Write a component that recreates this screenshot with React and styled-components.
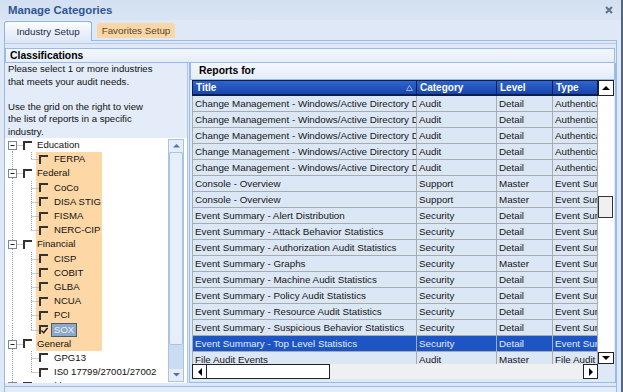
import styled, { createGlobalStyle } from "styled-components";

const GlobalStyle = createGlobalStyle`
  * { box-sizing: border-box; }
  html, body { margin: 0; padding: 0; background: #dfe8f6; }
  body { font-family: "Liberation Sans", Arial, sans-serif; font-size: 9.6px; color: #111; }
`;

const Window = styled.div`
  width: 623px;
  height: 392px;
  display: flex;
  flex-direction: column;
  background: #dfe8f6;
  border-right: 2px solid #55657c;
  overflow: hidden;
`;

const TitleBar = styled.div`
  height: 20px;
  display: flex;
  align-items: center;
  justify-content: space-between;
  padding: 0 8px 0 8px;
  background: linear-gradient(#d2e0f1, #dae5f4);
`;

const Title = styled.div`
  font-size: 11.4px;
  font-weight: bold;
  color: #2f5597;
`;

const TabStrip = styled.div`
  height: 20px;
  display: flex;
  align-items: flex-end;
  gap: 5px;
  padding-left: 4px;
`;

const Tab = styled.div`
  height: ${(p) => (p.$active ? "20px" : "15px")};
  width: ${(p) => p.$w}px;
  margin-bottom: ${(p) => (p.$active ? "-1px" : "2px")};
  display: flex;
  align-items: center;
  justify-content: center;
  font-size: 9.8px;
  position: relative;
  z-index: 1;
  color: ${(p) => (p.$active ? "#15284b" : "#5b4630")};
  background: ${(p) => (p.$active ? "linear-gradient(#fbfdff, #dfe8f6)" : "#f9d6a5")};
  border: ${(p) => (p.$active ? "1px solid #8db2e3" : "none")};
  border-bottom: none;
  border-radius: 3px 3px 0 0;
`;

const TabBody = styled.div`
  flex: 1;
  margin: 0 4px 0 4px;
  border: 1px solid #99bbe8;
  border-bottom: none;
  padding-top: 2px;
  display: flex;
  flex-direction: column;
`;

const Frame = styled.div`
  flex: 1;
  border-top: 1px solid #b5cce8;
  padding-top: 4px;
  display: flex;
  flex-direction: column;
`;

const SectionHeader = styled.div`
  height: 15px;
  margin: 0 1px 0 0;
  padding-left: 4px;
  border: 1px solid #99bbe8;
  background: linear-gradient(#f4f8fd, #e5edf8);
  font-size: 10.4px;
  font-weight: bold;
  line-height: 13px;
  color: #000;
`;

const Split = styled.div`
  height: 320px;
  display: flex;
`;

const Footer = styled.div`
  flex: 1;
  margin-top: 3px;
  border-top: 1px solid #99bbe8;
  background: #e4ecf8;
`;

const LeftPane = styled.div`
  width: 185px;
  display: flex;
  flex-direction: column;
  background: #e3ecf8;
  border-right: 1px solid #aac4e6;
`;

const Intro = styled.div`
  height: 75px;
  padding: 0 3px;
  line-height: 12.5px;
`;

const Tree = styled.div`
  flex: 1;
  display: flex;
  background: #fff;
  overflow: hidden;
`;

const TreeList = styled.div`
  flex: 1;
  overflow: hidden;
`;

const Highlight = styled.div`
  background: linear-gradient(#fdd8a6, #fdd8a6) no-repeat 31px 0 / 66px 100%;
`;

const TreeRow = styled.div`
  height: 14.2px;
  display: flex;
  align-items: center;
  white-space: nowrap;
`;

const Check = styled.span`
  width: 9px;
  height: 9px;
  flex: none;
  margin-right: ${(p) => p.$gap}px;
  border-top: 2px solid #333;
  border-left: 2px solid #333;
  display: flex;
  align-items: center;
  justify-content: center;
`;

const NodeLabel = styled.span`
  color: ${(p) => (p.$selected ? "#e9eff7" : "#111")};
  background: ${(p) => (p.$selected ? "#8ea8c9" : "transparent")};
  border: 1px solid ${(p) => (p.$selected ? "#4c5b6c" : "transparent")};
  padding: 0 2px;
  margin-left: -3px;
  line-height: 12px;
`;

const TreeScroll = styled.div`
  width: 16px;
  margin: 1px 3px 1px 0;
  display: flex;
  flex-direction: column;
  background: #c9dcf2;
  border: 1px solid #a9c3e5;
`;

const TreeArrow = styled.div`
  height: 12px;
  display: flex;
  align-items: center;
  justify-content: center;
  background: #e4edf9;
`;

const TreeThumb = styled.div`
  height: 193px;
  background: #e6eefa;
  border: 1px solid #a9c3e5;
  border-radius: 2px;
`;

const TreeTrack = styled.div`
  flex: 1;
`;

const RightPane = styled.div`
  flex: 1;
  margin-left: 1px;
  border: 1px solid #99bbe8;
  border-top: none;
  padding: 0 1px 3px 2px;
  display: flex;
  flex-direction: column;
`;

const PaneHeader = styled.div`
  height: 18px;
  margin: 0 -1px 0 -2px;
  padding-left: 8px;
  border: 1px solid #99bbe8;
  border-top: none;
  background: linear-gradient(#f4f8fd, #e5edf8);
  font-size: 10.4px;
  font-weight: bold;
  line-height: 16px;
  color: #000;
`;

const Grid = styled.div`
  flex: 1;
  display: flex;
  flex-direction: column;
`;

const GridMain = styled.div`
  height: 284px;
  display: flex;
`;

const Columns = styled.div`
  width: 406px;
  display: flex;
  flex-direction: column;
  overflow: hidden;
`;

const HeaderRow = styled.div`
  height: 16px;
  display: grid;
  grid-template-columns: 225px 80px 56px 45px;
  background: linear-gradient(#2f65cf, #1846ac);
  border-top: 1px solid #0b1f4d;
  border-bottom: 2px solid #0b1f4d;
`;

const HeaderCell = styled.div`
  display: flex;
  align-items: center;
  justify-content: space-between;
  padding: 0 3px;
  color: #fff;
  font-weight: bold;
  font-size: 10px;
  border-right: 1px solid #0b1f4d;
  border-left: ${(p) => (p.$first ? "1px solid #0b1f4d" : "none")};
  white-space: nowrap;
  overflow: hidden;
`;

const Body = styled.div`
  flex: 1;
  overflow: hidden;
`;

const Row = styled.div`
  height: 16px;
  display: grid;
  grid-template-columns: 225px 80px 56px 45px;
  background: ${(p) => (p.$selected ? "#1d55c5" : "#dce7f5")};
  color: ${(p) => (p.$selected ? "#e3ecff" : "#161616")};
`;

const Cell = styled.div`
  padding-left: 2px;
  line-height: 15px;
  font-size: 9.8px;
  border-right: 1px solid #a8abb0;
  border-bottom: 1px solid #a8abb0;
  border-left: ${(p) => (p.$first ? "1px solid #a8abb0" : "none")};
  white-space: nowrap;
  overflow: hidden;
`;

const VScroll = styled.div`
  width: 16px;
  display: flex;
  flex-direction: column;
  background: #fff;
`;

const ScrollBtn = styled.div`
  width: ${(p) => p.$w || 16}px;
  height: ${(p) => p.$h || 15}px;
  flex: none;
  display: flex;
  align-items: center;
  justify-content: center;
  background: #fff;
  border: 1px solid #222;
`;

const VTrack = styled.div`
  flex: 1;
  padding-top: 100px;
`;

const VThumb = styled.div`
  width: 15px;
  height: 22px;
  background: #f0f0f0;
  border: 1px solid #333;
`;

const HScroll = styled.div`
  height: 15px;
  display: flex;
  background: #f0f0f0;
`;

const HThumb = styled.div`
  width: 123px;
  background: #fff;
  border: 1px solid #222;
  border-left: none;
`;

const HTrack = styled.div`
  flex: 1;
`;

const Corner = styled.div`
  width: 16px;
  background: #dfe8f6;
`;

const industries = [
  { name: "Education", children: ["FERPA"] },
  { name: "Federal", children: ["CoCo", "DISA STIG", "FISMA", "NERC-CIP"] },
  { name: "Financial", children: ["CISP", "COBIT", "GLBA", "NCUA", "PCI", "SOX"] },
  { name: "General", children: ["GPG13", "IS0 17799/27001/27002"] },
  { name: "Healthcare", children: ["HIPAA"] },
];

const cm = ["Change Management - Windows/Active Directory Domain", "Audit", "Detail", "Authentication"];
const es = (t, l = "Detail") => ["Event Summary - " + t, "Security", l, "Event Summary"];
const reports = [
  cm, cm, cm, cm, cm,
  ["Console - Overview", "Support", "Master", "Event Summary"],
  ["Console - Overview", "Support", "Master", "Event Summary"],
  es("Alert Distribution"),
  es("Attack Behavior Statistics"),
  es("Authorization Audit Statistics"),
  es("Graphs", "Master"),
  es("Machine Audit Statistics"),
  es("Policy Audit Statistics"),
  es("Resource Audit Statistics"),
  es("Suspicious Behavior Statistics"),
  es("Top Level Statistics"),
  ["File Audit Events", "Audit", "Master", "File Audit"],
];

const dot = { stroke: "#8f9aa6", strokeWidth: 1, strokeDasharray: "1 1" };

function Gutter({ child, first, lastChild }) {
  if (!child) {
    return (
      <svg width="18" height="14" style={{ flex: "none" }}>
        <line x1="7.5" y1={first ? 7 : 0} x2="7.5" y2="14" {...dot} />
        <line x1="11.5" y1="7.5" x2="18" y2="7.5" {...dot} />
        <rect x="3.5" y="3.5" width="8" height="8" fill="#fff" stroke="#7c8894" />
        <line x1="5.5" y1="7.5" x2="9.5" y2="7.5" stroke="#222" />
      </svg>
    );
  }
  return (
    <svg width="34" height="14" style={{ flex: "none" }}>
      <line x1="7.5" y1="0" x2="7.5" y2="14" {...dot} />
      <line x1="26.5" y1="0" x2="26.5" y2={lastChild ? 7.5 : 14} {...dot} />
      <line x1="26.5" y1="7.5" x2="34" y2="7.5" {...dot} />
    </svg>
  );
}

function Tick() {
  return (
    <svg width="8" height="7" viewBox="0 0 8 7">
      <path d="M0.5 3.5 L3 6 L7.5 0.5" fill="none" stroke="#111" strokeWidth="1.6" />
    </svg>
  );
}

function Arrow({ dir, color = "#000", size = 4 }) {
  const s = size;
  const pts = {
    up: `0,${s} ${s},0 ${2 * s},${s}`,
    down: `0,0 ${2 * s},0 ${s},${s}`,
    left: `${s},0 ${s},${2 * s} 0,${s}`,
    right: `0,0 ${s},${s} 0,${2 * s}`,
  }[dir];
  const vertical = dir === "up" || dir === "down";
  return (
    <svg width={vertical ? 2 * s : s} height={vertical ? s : 2 * s}>
      <polygon points={pts} fill={color} />
    </svg>
  );
}

function TreeNode({ node }) {
  return (
    <TreeRow>
      <Gutter child={node.child} first={node.first} lastChild={node.lastChild} />
      <Check $gap={node.child ? 6 : 5}>{node.checked && <Tick />}</Check>
      <NodeLabel $selected={node.selected}>{node.label}</NodeLabel>
    </TreeRow>
  );
}

export default function App() {
  const flat = [];
  industries.forEach((ind, i) => {
    flat.push({ label: ind.name, first: i === 0 });
    ind.children.forEach((c, j) =>
      flat.push({
        label: c,
        child: true,
        lastChild: j === ind.children.length - 1,
        checked: c === "SOX",
        selected: c === "SOX",
      })
    );
  });

  return (
    <>
      <GlobalStyle />
      <Window>
        <TitleBar>
          <Title>Manage Categories</Title>
          <svg width="8" height="8" viewBox="0 0 8 8">
            <path d="M1 1 L7 7 M7 1 L1 7" stroke="#5f7391" strokeWidth="2" />
          </svg>
        </TitleBar>
        <TabStrip>
          <Tab $active $w={88}>Industry Setup</Tab>
          <Tab $w={78}>Favorites Setup</Tab>
        </TabStrip>
        <TabBody>
          <Frame>
            <SectionHeader>Classifications</SectionHeader>
            <Split>
              <LeftPane>
                <Intro>
                  Please select 1 or more industries
                  <br />
                  that meets your audit needs.
                  <br />
                  <br />
                  Use the grid on the right to view
                  <br />
                  the list of reports in a specific
                  <br />
                  industry.
                </Intro>
                <Tree>
                  <TreeList>
                    <TreeNode node={flat[0]} />
                    <Highlight>
                      {flat.slice(1, 15).map((n) => (
                        <TreeNode key={n.label} node={n} />
                      ))}
                    </Highlight>
                    {flat.slice(15).map((n) => (
                      <TreeNode key={n.label} node={n} />
                    ))}
                  </TreeList>
                  <TreeScroll>
                    <TreeArrow>
                      <Arrow dir="up" color="#4f74a8" size={3.5} />
                    </TreeArrow>
                    <TreeThumb />
                    <TreeTrack />
                    <TreeArrow>
                      <Arrow dir="down" color="#4f74a8" size={3.5} />
                    </TreeArrow>
                  </TreeScroll>
                </Tree>
              </LeftPane>
              <RightPane>
                <PaneHeader>Reports for</PaneHeader>
                <Grid>
                  <GridMain>
                    <Columns>
                      <HeaderRow>
                        <HeaderCell $first>
                          Title
                          <svg width="7" height="6">
                            <polygon points="0.5,5.5 3.5,0.5 6.5,5.5" fill="none" stroke="#9fb3da" />
                          </svg>
                        </HeaderCell>
                        <HeaderCell>Category</HeaderCell>
                        <HeaderCell>Level</HeaderCell>
                        <HeaderCell>Type</HeaderCell>
                      </HeaderRow>
                      <Body>
                        {reports.map((r, i) => (
                          <Row key={i} $selected={i === 15}>
                            {r.map((c, j) => (
                              <Cell key={j} $first={j === 0}>
                                {c}
                              </Cell>
                            ))}
                          </Row>
                        ))}
                      </Body>
                    </Columns>
                    <VScroll>
                      <ScrollBtn $h={16}>
                        <Arrow dir="up" />
                      </ScrollBtn>
                      <VTrack>
                        <VThumb />
                      </VTrack>
                      <ScrollBtn $h={12}>
                        <Arrow dir="down" />
                      </ScrollBtn>
                    </VScroll>
                  </GridMain>
                  <HScroll>
                    <ScrollBtn $w={15}>
                      <Arrow dir="left" />
                    </ScrollBtn>
                    <HThumb />
                    <HTrack />
                    <ScrollBtn $w={15}>
                      <Arrow dir="right" />
                    </ScrollBtn>
                    <Corner />
                  </HScroll>
                </Grid>
              </RightPane>
            </Split>
          </Frame>
          <Footer />
        </TabBody>
      </Window>
    </>
  );
}
